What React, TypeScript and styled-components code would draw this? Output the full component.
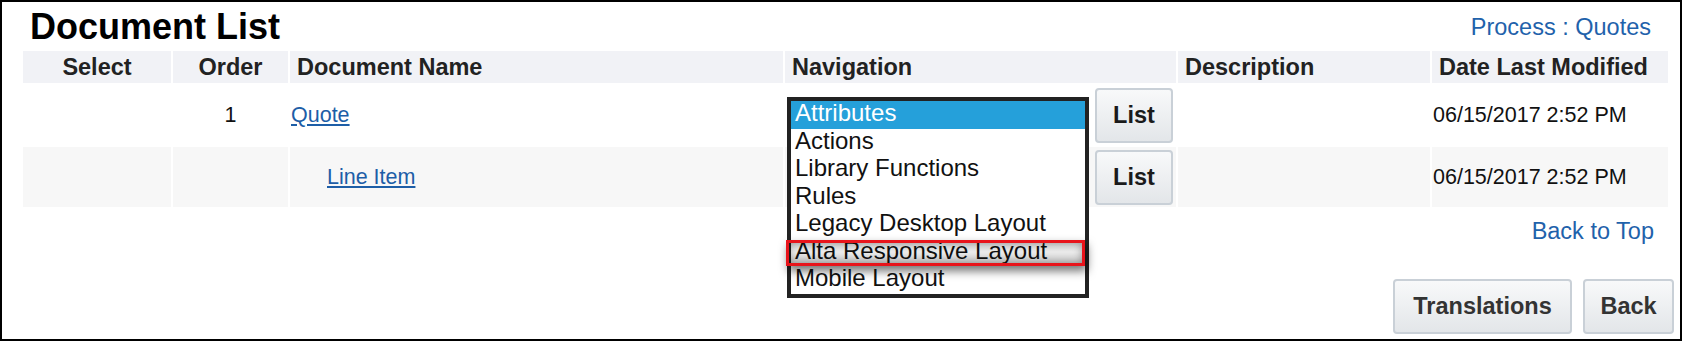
import React from "react";
import styled, { createGlobalStyle } from "styled-components";

const Global = createGlobalStyle`
  html, body { margin: 0; padding: 0; background: #fff; }
  body { font-family: "Liberation Sans", Arial, sans-serif; }
`;

const Frame = styled.div`
  box-sizing: border-box;
  width: 1682px;
  height: 341px;
  border: 2px solid #000;
  padding: 5px 0 0 21px;
  display: flex;
  flex-direction: column;
  overflow: hidden;
  font-family: "Liberation Sans", Arial, sans-serif;
`;

const TitleRow = styled.div`
  width: 1645px;
  display: flex;
  justify-content: space-between;
  align-items: flex-start;
  margin-bottom: 4px;
`;

const Title = styled.h1`
  margin: 0;
  padding-left: 7px;
  font-size: 36px;
  line-height: 40px;
  font-weight: bold;
  color: #000;
`;

const BlueLink = styled.a`
  font-size: 23.5px;
  line-height: 27px;
  color: #1f62ab;
  text-decoration: none;
  white-space: nowrap;
`;

const ProcessLink = styled(BlueLink)`
  margin: 7px 17px 0 0;
`;

const Grid = styled.div`
  display: grid;
  grid-template-columns: 148px 115px 493px 391px 252px 236px;
  grid-template-rows: 32px 60px 60px;
  gap: 2px;
  width: 1645px;
`;

const HeadCell = styled.div<{ $center?: boolean }>`
  background: #f1f2f6;
  display: flex;
  align-items: center;
  justify-content: ${(p) => (p.$center ? "center" : "flex-start")};
  padding-left: ${(p) => (p.$center ? "0" : "7px")};
  font-weight: bold;
  font-size: 23.5px;
  color: #222;
  white-space: nowrap;
`;

const Cell = styled.div<{ $shade?: boolean; $center?: boolean; $pad?: number }>`
  position: relative;
  background: ${(p) => (p.$shade ? "#f7f7f7" : "#fff")};
  display: flex;
  align-items: center;
  justify-content: ${(p) => (p.$center ? "center" : "flex-start")};
  padding-left: ${(p) => p.$pad ?? 0}px;
  font-size: 21.5px;
  color: #111;
  white-space: nowrap;
`;

const NavCell = styled(Cell)`
  justify-content: flex-end;
  padding-right: 3px;
`;

const DocLink = styled.a`
  font-size: 21.5px;
  color: #1d5ea7;
  text-decoration: underline;
  text-underline-offset: 2px;
`;

const ListButton = styled.button`
  box-sizing: border-box;
  width: 78px;
  height: 55px;
  border: 2px solid #c9d0d7;
  border-radius: 4px;
  background: linear-gradient(#f8f9fa, #e3e6e9);
  font-family: "Liberation Sans", Arial, sans-serif;
  font-weight: bold;
  font-size: 23.5px;
  color: #1a1a1a;
  padding: 0;
`;

const ListBox = styled.div`
  position: absolute;
  left: 2px;
  top: 12px;
  z-index: 5;
  box-sizing: border-box;
  width: 302px;
  border: 4px solid #222;
  background: #fff;
`;

const Option = styled.div<{ $selected?: boolean }>`
  box-sizing: border-box;
  height: 27.5px;
  padding: 0 0 3.5px 4px;
  font-size: 24px;
  line-height: 24px;
  white-space: nowrap;
  background: ${(p) => (p.$selected ? "#25a0da" : "#fff")};
  color: ${(p) => (p.$selected ? "#fff" : "#111")};
`;

const Callout = styled.div`
  position: absolute;
  left: -5px;
  top: 139px;
  width: 299px;
  height: 26px;
  box-sizing: border-box;
  border: 3px solid #e8141b;
  background: linear-gradient(rgba(0, 0, 0, 0.14), rgba(0, 0, 0, 0.08) 45%, rgba(0, 0, 0, 0.2));
  box-shadow: 2px 5px 10px rgba(0, 0, 0, 0.55), inset 0 0 8px rgba(0, 0, 0, 0.35);
  pointer-events: none;
`;

const BackTopRow = styled.div`
  display: flex;
  justify-content: flex-end;
  padding-right: 26px;
  margin-top: 11px;
`;

const ButtonsRow = styled.div`
  display: flex;
  justify-content: flex-end;
  gap: 11px;
  padding-right: 6px;
  margin-top: 34px;
`;

const FooterButton = styled.button<{ $w: number }>`
  box-sizing: border-box;
  width: ${(p) => p.$w}px;
  height: 55px;
  border: 2px solid #c9d0d7;
  border-radius: 4px;
  background: linear-gradient(#f8f9fa, #e3e6e9);
  font-family: "Liberation Sans", Arial, sans-serif;
  font-weight: bold;
  font-size: 23.5px;
  color: #333;
  padding: 0;
`;

const options = [
  "Attributes",
  "Actions",
  "Library Functions",
  "Rules",
  "Legacy Desktop Layout",
  "Alta Responsive Layout",
  "Mobile Layout",
];

export default function App() {
  return (
    <>
      <Global />
      <Frame>
        <TitleRow>
          <Title>Document List</Title>
          <ProcessLink>Process : Quotes</ProcessLink>
        </TitleRow>
        <Grid>
          <HeadCell $center>Select</HeadCell>
          <HeadCell $center>Order</HeadCell>
          <HeadCell>Document Name</HeadCell>
          <HeadCell>Navigation</HeadCell>
          <HeadCell>Description</HeadCell>
          <HeadCell>Date Last Modified</HeadCell>

          <Cell />
          <Cell $center>1</Cell>
          <Cell $pad={1}>
            <DocLink>Quote</DocLink>
          </Cell>
          <NavCell>
            <ListBox role="listbox">
              {options.map((o, i) => (
                <Option key={o} $selected={i === 0}>
                  {o}
                </Option>
              ))}
              <Callout />
            </ListBox>
            <ListButton>List</ListButton>
          </NavCell>
          <Cell />
          <Cell $pad={1}>06/15/2017 2:52 PM</Cell>

          <Cell $shade />
          <Cell $shade />
          <Cell $shade $pad={37}>
            <DocLink>Line Item</DocLink>
          </Cell>
          <NavCell $shade>
            <ListButton>List</ListButton>
          </NavCell>
          <Cell $shade />
          <Cell $shade $pad={1}>06/15/2017 2:52 PM</Cell>
        </Grid>
        <BackTopRow>
          <BlueLink>Back to Top</BlueLink>
        </BackTopRow>
        <ButtonsRow>
          <FooterButton $w={179}>Translations</FooterButton>
          <FooterButton $w={91}>Back</FooterButton>
        </ButtonsRow>
      </Frame>
    </>
  );
}
